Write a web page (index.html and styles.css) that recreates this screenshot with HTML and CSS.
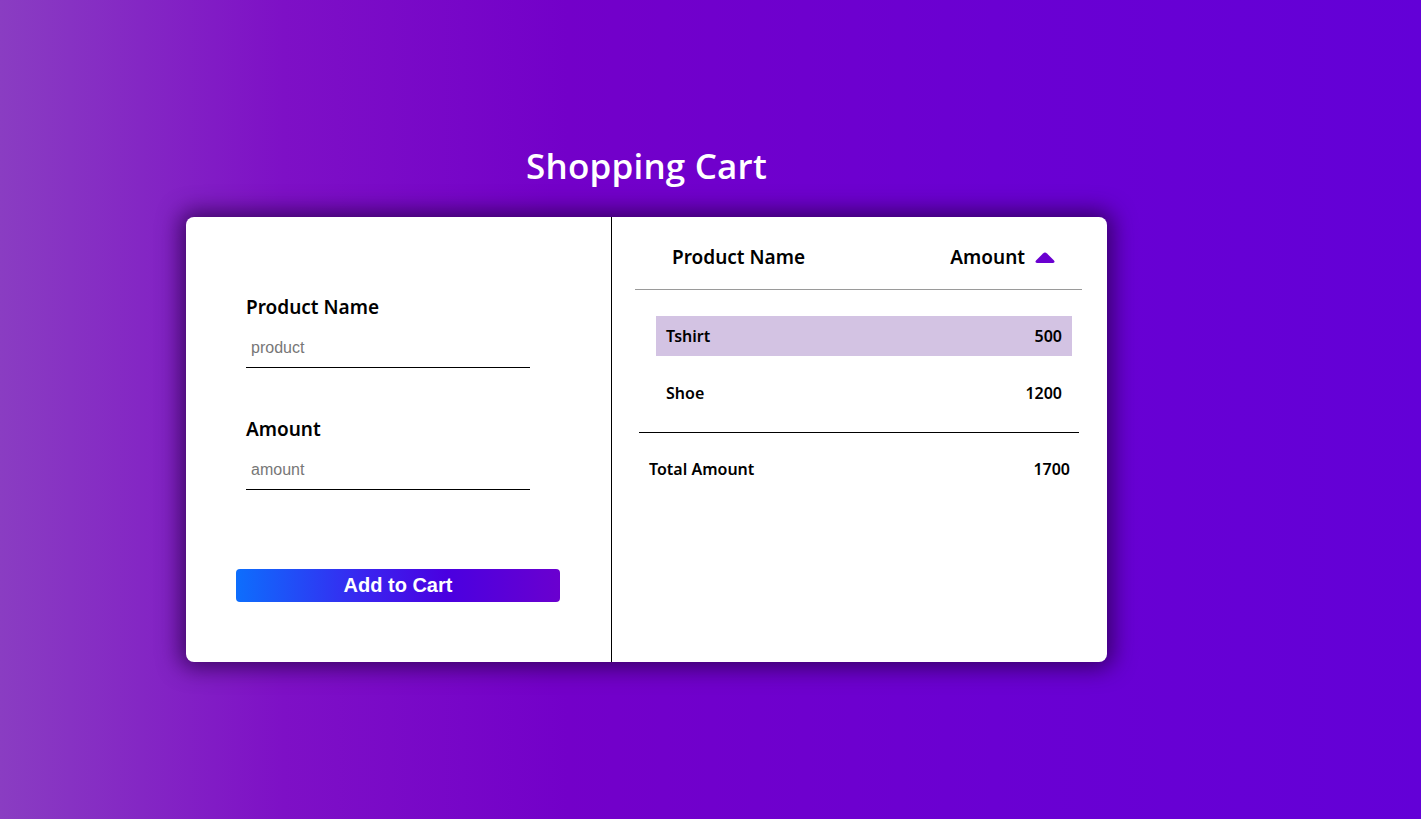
FILE: index.html
```html
<!DOCTYPE html>
<html>
<head>
<meta charset="utf-8">
<link rel="stylesheet" href="styles.css">
</head>
<body>
<div class="page">
  <h1 class="title">Shopping Cart</h1>
  <div class="card">
    <form class="form-panel">
      <div class="field">
        <label class="label">Product Name</label>
        <input class="input" type="text" placeholder="product">
      </div>
      <div class="field field-second">
        <label class="label">Amount</label>
        <input class="input" type="text" placeholder="amount">
      </div>
      <button class="add-btn" type="button">Add to Cart</button>
    </form>
    <div class="list-panel">
      <div class="list-head">
        <span class="head-name">Product Name</span>
        <span class="head-amount">Amount
          <svg class="sort-icon" width="22" height="13" viewBox="0 0 22 13"><path d="M11 1.5 Q12 1.5 13 2.5 L20 9.5 Q21.5 11.5 19 12 L3 12 Q0.5 11.5 2 9.5 L9 2.5 Q10 1.5 11 1.5 Z" fill="#6a00d0"/></svg>
        </span>
      </div>
      <div class="rows">
        <div class="row row-active"><span>Tshirt</span><span>500</span></div>
        <div class="row"><span>Shoe</span><span>1200</span></div>
      </div>
      <div class="total"><span>Total Amount</span><span>1700</span></div>
    </div>
  </div>
</div>
</body>
</html>
```

FILE: styles.css
```css
* { box-sizing: border-box; }
html, body { margin: 0; height: 100%; }
body {
  background: linear-gradient(to right, #8a3dc2 0%, #7e10c6 20%, #7300c9 40%, #6a00d2 70%, #6300d7 100%);
  font-family: "Noto Sans", "Open Sans", sans-serif;
  color: #000;
}
.page {
  width: 921px;
  margin-left: 186px;
  padding-top: 143px;
}
.title {
  margin: 0 0 28px;
  text-align: center;
  color: #fff;
  font-family: "Open Sans", sans-serif;
  font-weight: 600;
  font-size: 35px;
  line-height: 46px;
  letter-spacing: 0.2px;
}
.card {
  display: flex;
  height: 445px;
  background: #fff;
  border-radius: 8px;
  box-shadow: 0 0 22px 6px rgba(40, 0, 70, 0.75);
  overflow: hidden;
}
.form-panel {
  width: 426px;
  border-right: 1px solid #000;
  padding: 76px 0 0 50px;
  display: flex;
  flex-direction: column;
}
.field {
  display: flex;
  flex-direction: column;
  margin-left: 10px;
  width: 284px;
}
.field-second { margin-top: 47px; }
.label {
  font-size: 19px;
  font-weight: 600;
  line-height: 28px;
  margin-bottom: 16px;
}
.input {
  border: none;
  border-bottom: 1px solid #000;
  outline: none;
  font-family: "Liberation Sans", Arial, sans-serif;
  font-size: 16px;
  padding: 0 0 8px 5px;
  height: 31px;
  width: 284px;
}
.input::placeholder { color: #777; }
.add-btn {
  margin-top: 79px;
  width: 324px;
  height: 33px;
  border: none;
  border-radius: 4px;
  background: linear-gradient(to right, #0d6efd 0%, #3a24ef 40%, #4a00e0 65%, #6a00cf 100%);
  color: #fff;
  font-family: "Liberation Sans", Arial, sans-serif;
  font-weight: 700;
  font-size: 20px;
  padding: 0;
}
.list-panel {
  flex: 1;
  padding: 0 25px 0 23px;
  display: flex;
  flex-direction: column;
}
.list-head {
  display: flex;
  justify-content: space-between;
  align-items: center;
  height: 73px;
  padding: 7px 26px 0 37px;
  border-bottom: 1px solid #9a9a9a;
  font-size: 19px;
  font-weight: 600;
  line-height: 28px;
}
.head-amount { display: flex; align-items: center; gap: 9px; }
.sort-icon { display: block; margin-top: 1px; }
.rows {
  padding: 26px 10px 19px 21px;
  display: flex;
  flex-direction: column;
  gap: 17px;
}
.row {
  display: flex;
  justify-content: space-between;
  align-items: center;
  height: 40px;
  padding: 0 10px;
  font-size: 16px;
  font-weight: 600;
}
.row-active { background: #d3c3e3; }
.total {
  margin: 0 3px 0 4px;
  border-top: 1px solid #000;
  display: flex;
  justify-content: space-between;
  padding: 25px 9px 0 10px;
  font-size: 16px;
  font-weight: 600;
}
```
